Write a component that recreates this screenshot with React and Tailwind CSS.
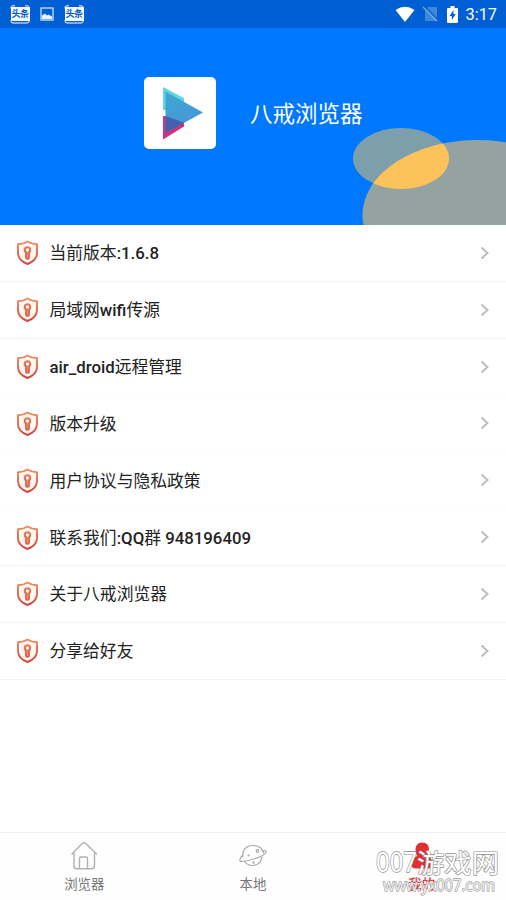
import React from "react";

const rows = [
  { label: [["当前版本", 0], [":1.6.8", 1]], line: true },
  { label: [["局域网", 0], ["wifi", 1], ["传源", 0]], line: true },
  { label: [["air_droid", 1], ["远程管理", 0]], line: false },
  { label: [["版本升级", 0]], line: false },
  { label: [["用户协议与隐私政策", 0]], line: false },
  { label: [["联系我们", 0], [":QQ", 1], ["群", 0], [" 948196409", 1]], line: true },
  { label: [["关于八戒浏览器", 0]], line: true },
  { label: [["分享给好友", 0]], line: true },
];

function NewsBadge() {
  return (
    <div className="relative flex h-[19px] w-5 items-center justify-center">
      <svg className="absolute inset-0" width="20" height="19" viewBox="0 0 20 19" fill="none" stroke="#fff" strokeWidth="1">
        <path d="M1 3.5V2.5Q1 .8 3 .8h2M15 .8h2q2 0 2 1.7v1M1 15.5v1Q1 18 3 18h14q2 0 2-1.5v-1" />
      </svg>
      <div className="relative flex h-[14px] w-[19px] items-center justify-center overflow-hidden whitespace-nowrap bg-[#f4faff] text-[9px] font-bold leading-none tracking-[-0.5px] text-[#0759bd]">
        头条
      </div>
    </div>
  );
}

function StatusBar() {
  return (
    <div className="flex h-7 items-center bg-[#005fd3] pl-[10px] pr-[9px]">
      <NewsBadge />
      <svg className="ml-[10px] mr-[10px]" width="14" height="14" viewBox="0 0 14 14">
        <rect x="1" y="1" width="12" height="12" fill="none" stroke="#c6e2ff" strokeWidth="1.3" />
        <path d="M2 12V8.5L5 6.5l2 2 1.5-1L12 9.500V12z" fill="#e8f5ff" />
      </svg>
      <NewsBadge />
      <div className="flex-1" />
      <svg width="20" height="17" viewBox="0 0 20 17">
        <path d="M.5 4Q10-2.5 19.5 4L10 16z" fill="#fff" />
      </svg>
      <svg className="ml-[7px]" width="17" height="18" viewBox="0 0 17 18">
        <path d="M6 2h9v14H3V5z" fill="#3f86dc" />
        <path d="M2 1l14 14" stroke="#005fd3" strokeWidth="1.6" />
        <path d="M1 2l14 14" stroke="#76aeea" strokeWidth="1.3" />
      </svg>
      <svg className="ml-[8px]" width="11" height="17" viewBox="0 0 11 17">
        <path d="M3.5 0h4v2H10q1 0 1 1v13q0 1-1 1H1q-1 0-1-1V3q0-1 1-1h2.5z" fill="#fff" />
        <path d="M6.5 4L2.500 10h2.300v4l4-6H6.500z" fill="#005fd3" />
      </svg>
      <span className="ml-[8px] mt-[2px] text-[16.3px] leading-none text-white">3:17</span>
    </div>
  );
}

function Header() {
  return (
    <div className="relative flex h-[197px] items-start overflow-hidden bg-[#0078fe] pl-36 pt-[49px]">
      <svg className="absolute inset-0" width="506" height="197" viewBox="0 28 506 197">
        <defs>
          <clipPath id="smallOval">
            <ellipse cx="401" cy="158.5" rx="48" ry="30.5" />
          </clipPath>
        </defs>
        <ellipse cx="401" cy="158.5" rx="48" ry="30.5" fill="#7d9fac" />
        <ellipse cx="477.5" cy="215" rx="115" ry="75" fill="#94a39f" />
        <ellipse cx="477.5" cy="215" rx="115" ry="75" fill="#fdc35a" clipPath="url(#smallOval)" />
      </svg>
      <div className="relative h-[72px] w-[72px] rounded-[5px] bg-white">
        <svg width="72" height="72" viewBox="0 0 72 72">
          <defs>
            <linearGradient id="play" x1="0" y1="0" x2=".3" y2="1">
              <stop offset="0" stopColor="#3ba9d5" />
              <stop offset="1" stopColor="#4b93d8" />
            </linearGradient>
          </defs>
          <path d="M19 10l21 11v14L19 33z" fill="#62d5e3" />
          <path d="M19 39l21 1v9.500L19 62.500z" fill="#d52e7b" />
          <path d="M21.500 14.500L59 35.500 21.500 56z" fill="url(#play)" />
          <path d="M21.500 39L40 45.800 21.500 56z" fill="#424da0" opacity=".75" />
        </svg>
      </div>
      <h1 className="relative ml-[34px] mt-[20px] text-[22.5px] font-normal leading-[34px] text-white">八戒浏览器</h1>
    </div>
  );
}

function Shield() {
  return (
    <svg className="ml-px mt-px shrink-0" width="24" height="26" viewBox="0 0 24 26" fill="none">
      <defs>
        <linearGradient id="shield" x1="0" y1="0" x2="0" y2="26" gradientUnits="userSpaceOnUse">
          <stop stopColor="#ec9060" />
          <stop offset="1" stopColor="#cb4340" />
        </linearGradient>
      </defs>
      <path d="M11.500 1.500Q7.200 4.300 2 4.300V13Q2 20.500 11.500 24 21 20.500 21 13V4.300Q15.800 4.300 11.500 1.500z" fill="#fff6f0" stroke="url(#shield)" strokeWidth="1.900" strokeLinejoin="round" />
      <circle cx="11.500" cy="10" r="2.700" stroke="url(#shield)" strokeWidth="2" />
      <path d="M9.900 12v5.800q0 1.200 1.600 1.200t1.600-1.200V12" fill="#ee8b6c" stroke="url(#shield)" strokeWidth="1.600" />
    </svg>
  );
}

function MenuRow({ label, line }) {
  return (
    <li className={`flex h-[56.85px] items-center border-b pl-[15px] pr-4 ${line ? "border-[#f3f3f3]" : "border-[#fdfdfd]"}`}>
      <Shield />
      <span className="ml-[9.500px] mt-px flex-1 whitespace-pre text-[16.8px] leading-6 text-[#222]">
        {label.map(([text, latin]) => (
          <span key={text} className={latin ? "font-medium" : "font-normal"}>{text}</span>
        ))}
      </span>
      <svg width="10" height="14" viewBox="0 0 10 14" fill="none" stroke="#bdbdbd" strokeWidth="2">
        <path d="M1.500 1.500L7.500 7l-6 5.500" />
      </svg>
    </li>
  );
}

function TabBar() {
  return (
    <nav className="relative grid h-[68px] grid-cols-3 border-t border-[#eee] bg-[#fefefe] text-[13.4px] leading-5 text-[#777]">
      <div className="flex flex-col items-center pt-2">
        <svg width="30" height="30" viewBox="0 0 30 30" fill="none" stroke="#b0b0b0" strokeWidth="1.400" strokeLinecap="round" strokeLinejoin="round">
          <path d="M3 13L13.300 2.600q1.700-1.500 3.400 0L27.500 13M5 12v13q0 2.800 2.800 2.800h14.900q2.800 0 2.800-2.800V12M10.500 27V17.500q0-1.500 1.500-1.500h5q1.500 0 1.500 1.500V27" />
        </svg>
        <span className="mt-[4px]">浏览器</span>
      </div>
      <div className="flex flex-col items-center pt-2">
        <svg width="30" height="30" viewBox="0 0 30 30" fill="none" stroke="#a9a9a9" strokeWidth="1.200" strokeLinecap="round">
          <path d="M5 16C3.500 9 8.500 4.500 15 4.500c5.500 0 9.500 2.800 10.500 7.500M24 16Q22.500 24 15 24.500 9.500 24.500 6.500 20.500" />
          <path d="M4.500 14.500C1 17.500 1 20.500 4 20.500c5.500 0 22-5 24-9 .8-1.500-.8-2.200-3-1.500" />
          <circle cx="19.500" cy="10" r="1.300" />
          <circle cx="10.500" cy="14.500" r=".5" />
          <circle cx="15.500" cy="21.500" r=".6" />
        </svg>
        <span className="mt-[4px]">本地</span>
      </div>
      <div className="flex flex-col items-center pt-2 text-[#e03a3c]">
        <svg width="30" height="30" viewBox="0 0 30 30">
          <path d="M8.500 9q0-7.500 6.800-7.500T22 9q0 3.500-1.800 6 5.300 2.500 5.300 7v1.500q0 4-4 4H8.500q-4 0-4-4V22q0-4.500 5.500-7Q8.500 12.500 8.500 9z" fill="#e22f31" />
        </svg>
        <span className="mt-[4px] font-medium">我的</span>
      </div>
      <svg className="pointer-events-none absolute right-0 top-0" width="140" height="67" viewBox="366 833 140 67" fill="#fff" stroke="#8d8d8d" strokeWidth="1.300" strokeLinejoin="round" paintOrder="stroke">
        <text x="376" y="872" fontSize="27" textLength="41" lengthAdjust="spacingAndGlyphs" fontFamily="Noto Sans, Noto Sans CJK SC, sans-serif">007</text>
        <text x="417" y="873" fontSize="26.500" textLength="82" lengthAdjust="spacingAndGlyphs" fontFamily="Noto Sans CJK SC, sans-serif">游戏网</text>
        <text x="383" y="891" fontSize="15.500" textLength="112" lengthAdjust="spacingAndGlyphs" strokeWidth="1.300" fillOpacity=".85" strokeOpacity=".85" fontFamily="Noto Sans, sans-serif">www.yx007.com</text>
      </svg>
    </nav>
  );
}

export default function App() {
  return (
    <main className="flex h-[900px] w-[506px] flex-col overflow-hidden bg-white font-['Roboto','Noto_Sans_CJK_SC',sans-serif]">
      <StatusBar />
      <Header />
      <ul className="flex-1">
        {rows.map((row, i) => (
          <MenuRow key={i} {...row} />
        ))}
      </ul>
      <TabBar />
    </main>
  );
}
